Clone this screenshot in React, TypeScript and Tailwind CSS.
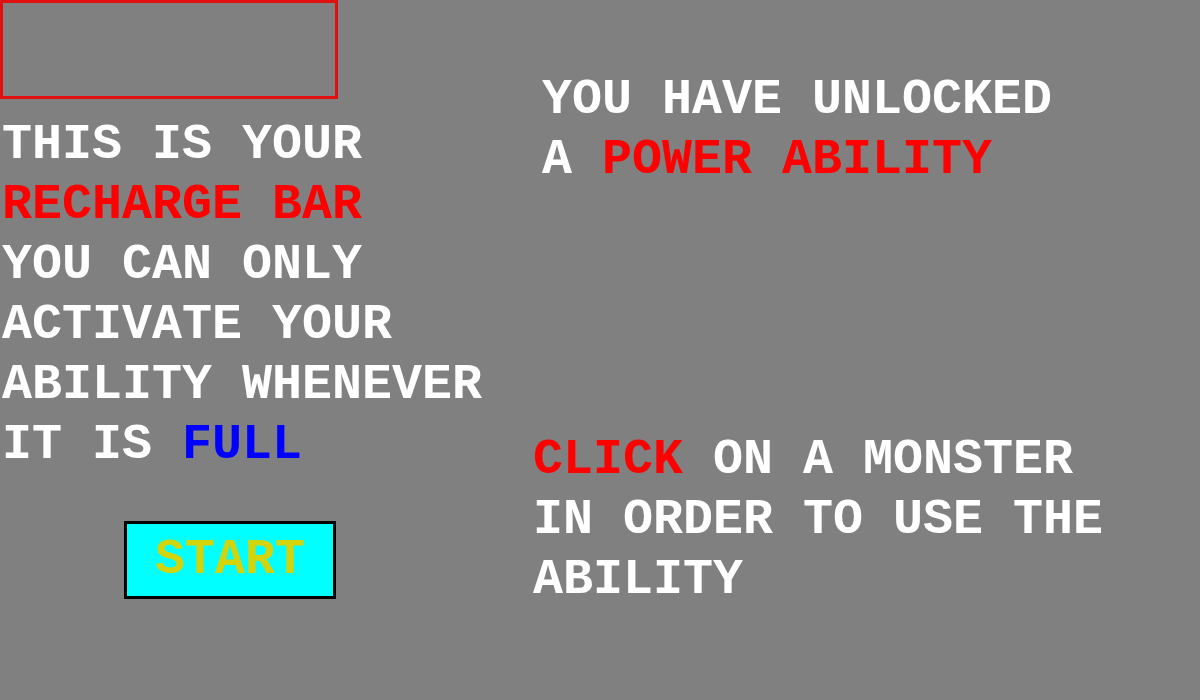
import React from "react";

const Line = ({ children }: { children: React.ReactNode }) => (
  <div className="whitespace-pre">{children}</div>
);

export default function App() {
  return (
    <div className="w-[1200px] h-[700px] bg-[#808080] flex font-['Courier_New','Nimbus_Mono_PS','Nimbus_Mono_L','FreeMono','Courier','Liberation_Mono',monospace] font-bold text-[50px] leading-[60px] text-white overflow-hidden">
      <div className="w-[490px] shrink-0 flex flex-col">
        <div className="w-[338px] h-[99px] border-[3px] border-[#e01010]" />
        <div className="mt-[16px] pl-[2px]">
          <Line>THIS IS YOUR</Line>
          <Line>
            <span className="text-[#ff0000]">RECHARGE BAR</span>
          </Line>
          <Line>YOU CAN ONLY</Line>
          <Line>ACTIVATE YOUR</Line>
          <Line>ABILITY WHENEVER</Line>
          <Line>
            IT IS <span className="text-[#0000ff]">FULL</span>
          </Line>
        </div>
        <button className="mt-[46px] ml-[124px] w-[212px] h-[78px] border-[3px] border-black bg-[#00ffff] text-[#d4d40a] flex items-center justify-center">
          START
        </button>
      </div>
      <div className="flex flex-col">
        <div className="pt-[70px] pl-[52px]">
          <Line>YOU HAVE UNLOCKED</Line>
          <Line>
            A <span className="text-[#ff0000]">POWER ABILITY</span>
          </Line>
        </div>
        <div className="mt-[240px] pl-[43px]">
          <Line>
            <span className="text-[#ff0000]">CLICK</span> ON A MONSTER
          </Line>
          <Line>IN ORDER TO USE THE</Line>
          <Line>ABILITY</Line>
        </div>
      </div>
    </div>
  );
}
